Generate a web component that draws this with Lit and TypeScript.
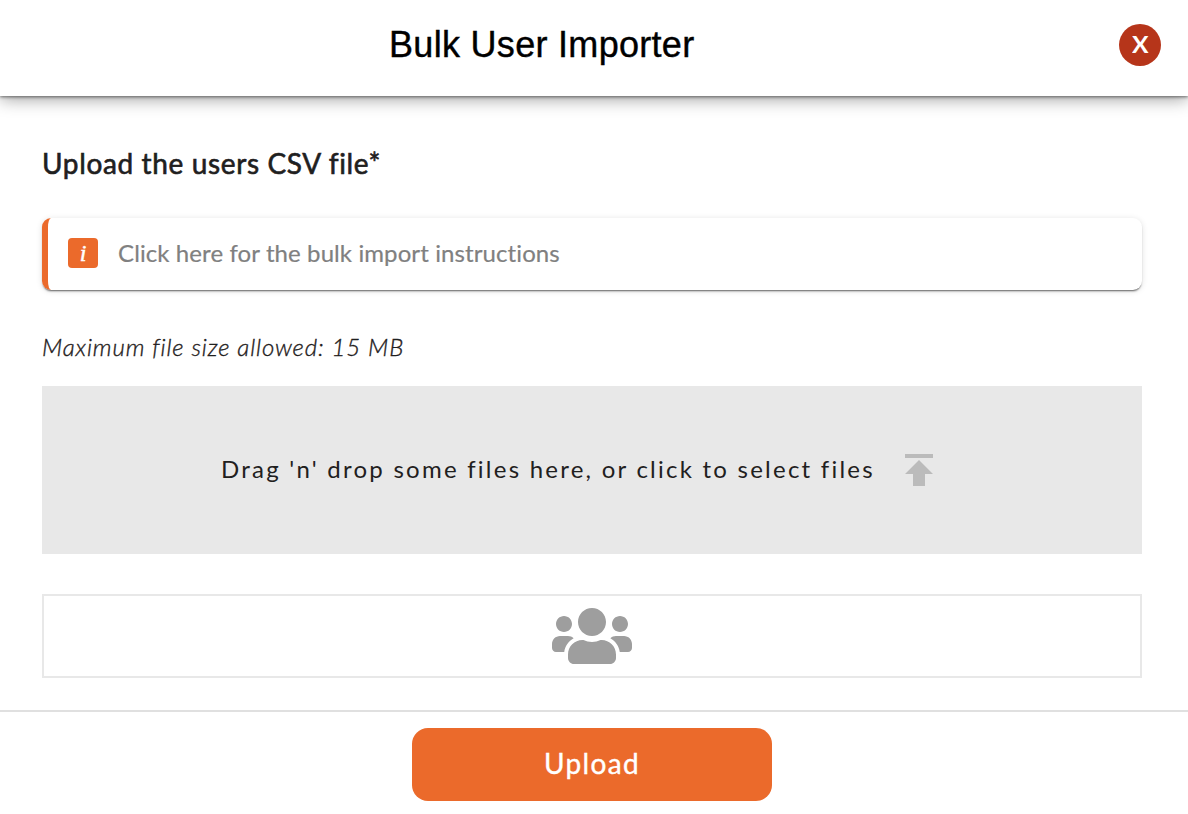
import { LitElement, html, css } from "lit";
import { customElement } from "lit/decorators.js";

@customElement("app-root")
export class AppRoot extends LitElement {
  static styles = css`
    :host { display: flex; flex-direction: column; height: 814px; overflow: hidden; background: #fff; color: #1f2020; font-family: Lato, "Noto Sans", sans-serif; }
    * { box-sizing: border-box; }
    header { height: 96px; flex: none; display: flex; align-items: flex-start; justify-content: space-between; padding: 24px 27px 0 389px; box-shadow: 0 1px 3px rgba(0,0,0,.5), 0 3px 16px rgba(0,0,0,.38); }
    h1 { margin: 0; font: 400 36px/42px "Liberation Sans", Arial, sans-serif; color: #000; letter-spacing: .3px; -webkit-text-stroke: .4px #000; white-space: nowrap; }
    .close { width: 42px; height: 42px; border: 0; border-radius: 50%; padding: 0; background: #b6351a; color: #fff; font: 700 22px/42px Lato, sans-serif; }
    .close span { display: inline-block; transform: scaleX(1.12); }
    main { height: 614px; flex: none; padding: 48px 46px 0 42px; }
    h2 { margin: 0; font-size: 28px; line-height: 38px; font-weight: 400; letter-spacing: .64px; -webkit-text-stroke: .6px #1f2020; white-space: nowrap; }
    .info { height: 72px; margin-top: 36px; display: flex; align-items: center; border-left: 6px solid #eb6a2b; border-radius: 9px; padding-left: 20px; box-shadow: 0 2px 2px -1px rgba(0,0,0,.6), 0 1px 6px rgba(0,0,0,.12); color: #808080; font-size: 24px; line-height: 34px; white-space: nowrap; }
    .badge { width: 30px; height: 30px; margin: -2px 20px 0 0; border-radius: 4px; background: #eb6a2b; color: #fff; text-align: center; font: italic 400 24px/31px "Liberation Serif", serif; -webkit-text-stroke: .5px #fff; }
    .link { letter-spacing: .1px; margin-top: -2px; -webkit-text-stroke: .2px #808080; }
    .limit { margin: 40px 0 0; font-size: 24px; line-height: 34px; font-style: italic; font-weight: 300; letter-spacing: .88px; -webkit-text-stroke: .35px #1f2020; white-space: nowrap; }
    .drop { height: 168px; margin-top: 22px; background: #e8e8e8; display: flex; align-items: center; padding-left: 179px; font-size: 24px; line-height: 34px; white-space: nowrap; }
    .drop span { width: 674px; letter-spacing: 2.24px; margin-top: -2px; }
    .drop svg { width: 48px; height: 48px; fill: #bbb; }
    .users { height: 84px; margin-top: 40px; border: 2px solid #e8e8e8; display: flex; align-items: center; justify-content: center; }
    .users svg { width: 80px; height: 64px; fill: #9e9e9e; }
    footer { flex: 1; border-top: 2px solid #e0e0e0; padding: 16px 0 0 412px; }
    .upload { display: block; width: 360px; height: 73px; padding: 0 0 3px; border: 0; border-radius: 16px; background: #eb6a2b; color: #fff; font: 400 28px/70px Lato, sans-serif; letter-spacing: 1.35px; -webkit-text-stroke: .4px #fff; }
  `;

  render() {
    return html`
      <header><h1>Bulk User Importer</h1><button class="close" aria-label="Close"><span>X</span></button></header>
      <main>
        <h2><span>Upload the users CSV file*</span></h2>
        <div class="info"><span class="badge">i</span><span class="link">Click here for the bulk import instructions</span></div>
        <p class="limit"><span>Maximum file size allowed: 15 MB</span></p>
        <div class="drop"><span>Drag 'n' drop some files here, or click to select files</span>
          <svg viewBox="0 0 24 24"><path d="M5 4v2h14V4H5zm0 10h4v6h6v-6h4l-7-7-7 7z"/></svg></div>
        <div class="users"><svg viewBox="0 0 640 512"><path d="M96 224c35.3 0 64-28.7 64-64s-28.7-64-64-64-64 28.7-64 64 28.7 64 64 64zm448 0c35.3 0 64-28.7 64-64s-28.7-64-64-64-64 28.7-64 64 28.7 64 64 64zm32 32h-64c-17.6 0-33.5 7.1-45.1 18.6 40.3 22.1 68.9 62 75.1 109.4h66c17.7 0 32-14.3 32-32v-32c0-35.3-28.7-64-64-64zm-256 0c61.9 0 112-50.1 112-112S381.9 32 320 32 208 82.1 208 144s50.1 112 112 112zm76.8 32h-8.3c-20.8 10-43.9 16-68.5 16s-47.6-6-68.5-16h-8.3C179.6 288 128 339.6 128 403.2V432c0 26.5 21.5 48 48 48h288c26.5 0 48-21.5 48-48v-28.8c0-63.6-51.6-115.2-115.2-115.2zm-223.7-13.4C161.5 263.1 145.6 256 128 256H64c-35.3 0-64 28.7-64 64v32c0 17.7 14.3 32 32 32h65.9c6.3-47.4 34.9-87.3 75.2-109.4z"/></svg></div>
      </main>
      <footer><button class="upload">Upload</button></footer>`;
  }
}
